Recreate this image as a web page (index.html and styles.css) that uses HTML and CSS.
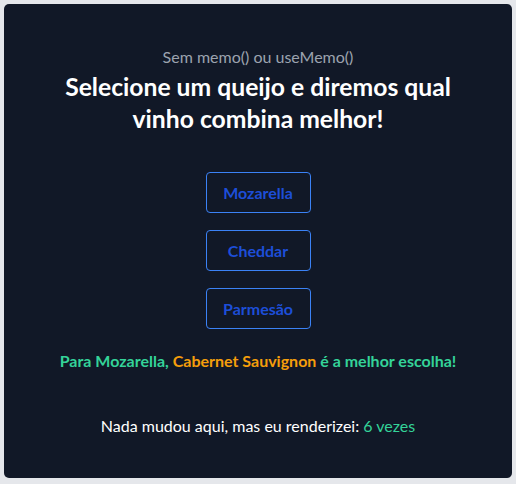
FILE: index.html
```html
<!DOCTYPE html>
<html lang="pt-BR">
<head>
<meta charset="utf-8">
<title>Queijos e vinhos</title>
<link rel="stylesheet" href="styles.css">
</head>
<body>
<main class="card">
  <p class="subtitle">Sem memo() ou useMemo()</p>
  <h1 class="title">Selecione um queijo e diremos qual vinho combina melhor!</h1>
  <div class="options">
    <button class="option">Mozarella</button>
    <button class="option">Cheddar</button>
    <button class="option">Parmesão</button>
  </div>
  <p class="result">Para Mozarella, <span class="wine">Cabernet Sauvignon</span> é a melhor escolha!</p>
  <p class="renders">Nada mudou aqui, mas eu renderizei: <span class="count">6 vezes</span></p>
</main>
</body>
</html>
```
FILE: styles.css
```css
html, body {
  margin: 0;
  padding: 0;
}
body {
  background: #e5e7eb;
  padding: 4px;
  font-family: "Lato", "Noto Sans", sans-serif;
}
.card {
  box-sizing: border-box;
  width: 508px;
  height: 474px;
  background: #111827;
  border-radius: 5px;
  padding: 41px 24px 0;
  display: flex;
  flex-direction: column;
  align-items: center;
  text-align: center;
}
.subtitle {
  margin: 0;
  color: #9ca3af;
  font-size: 16px;
  line-height: 24px;
}
.title {
  margin: 2px 0 0;
  width: 420px;
  color: #ffffff;
  font-size: 24.7px;
  line-height: 32px;
  font-weight: 700;
}
.options {
  margin-top: 37px;
  display: flex;
  flex-direction: column;
  gap: 17px;
  width: 105px;
}
.option {
  box-sizing: border-box;
  height: 41px;
  background: transparent;
  border: 1px solid #3b82f6;
  border-radius: 4px;
  color: #1d4ed8;
  font-family: inherit;
  font-size: 16px;
  font-weight: 700;
  padding: 0 12px;
  cursor: pointer;
}
.result {
  margin: 20px 0 0;
  color: #34d399;
  font-size: 16px;
  line-height: 24px;
  font-weight: 700;
}
.wine {
  color: #f59e0b;
}
.renders {
  margin: 41px 0 0;
  color: #ffffff;
  font-size: 16px;
  line-height: 24px;
}
.count {
  color: #34d399;
}
```
